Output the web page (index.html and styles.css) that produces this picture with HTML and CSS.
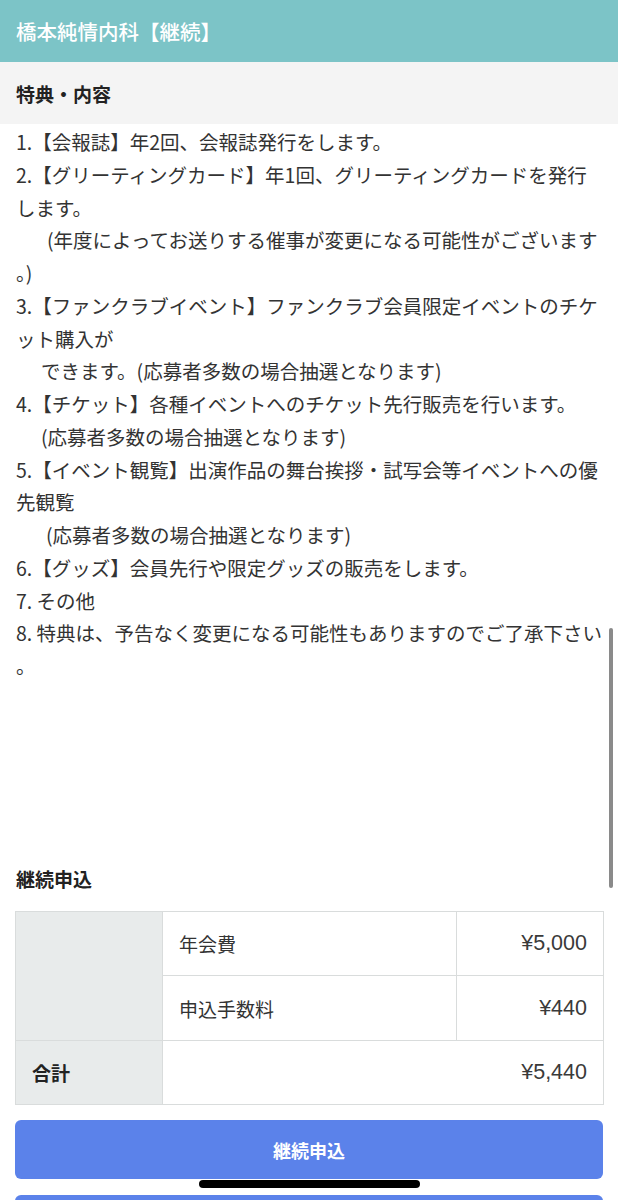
FILE: index.html
```html
<!DOCTYPE html>
<html lang="ja">
<head>
<meta charset="utf-8">
<title>橋本純情内科【継続】</title>
<link rel="stylesheet" href="styles.css">
</head>
<body>
<header class="topbar">
  <h1 class="topbar-title">橋本純情内科【継続】</h1>
</header>
<section class="benefits">
  <h2 class="band-title">特典・内容</h2>
  <div class="benefit-list">
    <p class="item">1.【会報誌】年2回、会報誌発行をします。</p>
    <p class="item">2.【グリーティングカード】年1回、グリーティングカードを発行<br>します。<br><span class="ind-c">(年度によってお送りする催事が変更になる可能性がございます</span><br>。)</p>
    <p class="item">3.【ファンクラブイベント】ファンクラブ会員限定イベントのチケ<br>ット購入が<br><span class="ind-a">できます。(応募者多数の場合抽選となります)</span></p>
    <p class="item">4.【チケット】各種イベントへのチケット先行販売を行います。<br><span class="ind-a">(応募者多数の場合抽選となります)</span></p>
    <p class="item">5.【イベント観覧】出演作品の舞台挨拶・試写会等イベントへの優<br>先観覧<br><span class="ind-b">(応募者多数の場合抽選となります)</span></p>
    <p class="item">6.【グッズ】会員先行や限定グッズの販売をします。</p>
    <p class="item">7. その他</p>
    <p class="item">8. 特典は、予告なく変更になる可能性もありますのでご了承下さい<br>。</p>
  </div>
</section>
<section class="apply">
  <h2 class="apply-title">継続申込</h2>
  <table class="fee-table">
    <colgroup>
      <col class="c1"><col class="c2"><col class="c3">
    </colgroup>
    <tbody>
      <tr>
        <th class="label" rowspan="2"></th>
        <td class="name">年会費</td>
        <td class="price">¥5,000</td>
      </tr>
      <tr>
        <td class="name">申込手数料</td>
        <td class="price">¥440</td>
      </tr>
      <tr>
        <th class="label total-label">合計</th>
        <td class="price" colspan="2">¥5,440</td>
      </tr>
    </tbody>
  </table>
  <button class="btn" type="button">継続申込</button>
  <button class="btn btn-next" type="button">&nbsp;</button>
</section>
<div class="scroll-indicator"></div>
<div class="home-indicator"></div>
</body>
</html>
```
FILE: styles.css
```css
* { box-sizing: border-box; }
html, body { margin: 0; padding: 0; }
body {
  width: 618px;
  font-family: "Noto Sans CJK JP", "Noto Sans", sans-serif;
  color: #2b2b2b;
  background: #ffffff;
  overflow: hidden;
  height: 1200px;
}
.topbar {
  background: #7cc4c7;
  height: 62px;
  display: flex;
  align-items: center;
  padding: 0 16px;
}
.topbar-title {
  margin: 0;
  font-size: 20.5px;
  font-weight: 500;
  color: #ffffff;
  line-height: 1;
  letter-spacing: 0;
}
.band-title {
  margin: 0;
  background: #f4f4f4;
  height: 62px;
  display: flex;
  align-items: center;
  padding: 0 16px;
  font-size: 19px;
  font-weight: 700;
  color: #222;
}
.benefit-list {
  padding: 2px 8px 0 16px;
  font-size: 19.5px;
  line-height: 32.75px;
  color: #333;
  white-space: nowrap;
}
.item { margin: 0; }
.ind-a { padding-left: 25px; }
.ind-b { padding-left: 30px; }
.ind-c { padding-left: 31px; }
.apply {
  padding: 0 15px;
}
.apply-title {
  margin: 180px 1px 16px;
  font-size: 19px;
  font-weight: 700;
  line-height: 32px;
  color: #222;
}
.fee-table {
  width: 588px;
  border-collapse: collapse;
  table-layout: fixed;
  font-size: 19px;
  color: #333;
}
.c1 { width: 147px; }
.c2 { width: 294px; }
.c3 { width: 147px; }
.fee-table th, .fee-table td {
  border: 1.5px solid #d9dcdc;
  height: 64.5px;
  padding: 0 16px;
  vertical-align: middle;
  font-weight: 400;
}
.label {
  background: #e8ebeb;
  text-align: left;
}
.total-label {
  font-weight: 700 !important;
  color: #222;
}
.name { text-align: left; }
.price {
  text-align: right;
  font-family: "Liberation Sans", "Noto Sans CJK JP", sans-serif;
  font-size: 21.5px;
  color: #3a3a3a;
}
.btn {
  display: flex;
  align-items: center;
  justify-content: center;
  width: 588px;
  height: 59px;
  margin-top: 15px;
  border: none;
  border-radius: 6px;
  background: #5b82ea;
  color: #ffffff;
  font-family: inherit;
  font-size: 18px;
  font-weight: 700;
}
.btn-next { margin-top: 16px; }
.scroll-indicator {
  position: fixed;
  left: 609px;
  top: 628px;
  width: 4px;
  height: 260px;
  border-radius: 2px;
  background: #8a8a8a;
}
.home-indicator {
  position: fixed;
  left: 199px;
  top: 1180px;
  width: 221px;
  height: 8px;
  border-radius: 4px;
  background: #000;
}
```
